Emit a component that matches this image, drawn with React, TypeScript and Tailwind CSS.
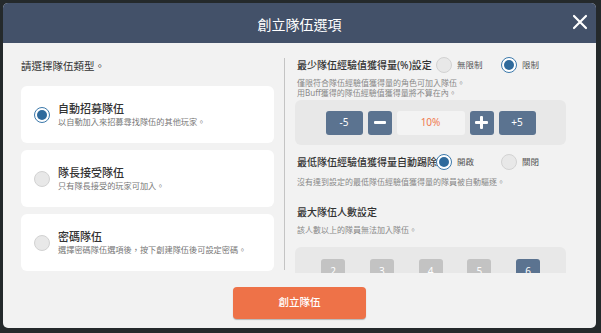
import React from 'react';

const font = { fontFamily: '"Noto Sans", "Noto Sans CJK TC", sans-serif' };

const Radio: React.FC<{ on?: boolean }> = ({ on }) =>
  on ? (
    <span className="w-4 h-4 rounded-full border-[1.5px] border-[#3b78aa] bg-white flex items-center justify-center shrink-0">
      <span className="w-[10px] h-[10px] rounded-full bg-[#2f6a9c]" />
    </span>
  ) : (
    <span className="w-4 h-4 rounded-full border-[1.5px] border-[#d2d2d2] bg-[#e8e8e8] shrink-0" />
  );

const TypeCard: React.FC<{ title: string; desc: string; on?: boolean }> = ({ title, desc, on }) => (
  <div className="h-[57px] bg-white rounded-[6px] flex items-center pl-[13px]">
    <Radio on={on} />
    <div className="ml-[8px] flex flex-col">
      <span className="text-[11px] leading-[14px] text-[#333] font-medium whitespace-nowrap">{title}</span>
      <span className="text-[8.2px] leading-[11px] text-[#777] whitespace-nowrap">{desc}</span>
    </div>
  </div>
);

const Option: React.FC<{ label: string; on?: boolean }> = ({ label, on }) => (
  <div className="w-[73px] flex items-center">
    <Radio on={on} />
    <span className="ml-[5px] text-[8.5px] text-[#555] whitespace-nowrap">{label}</span>
  </div>
);

const StepBtn: React.FC<{ w: string; children: React.ReactNode }> = ({ w, children }) => (
  <div className={`${w} h-[24px] rounded-[3px] bg-[#5b7390] text-white text-[10px] flex items-center justify-center`}>
    {children}
  </div>
);

export default function App() {
  return (
    <div style={font} className="w-[601px] h-[333px] bg-[#24292b] pt-[3px] pl-[3px]">
      <div className="w-[593px] h-[325px] bg-[#f2f2f2] rounded-[5px] overflow-hidden flex flex-col">
        <header className="h-[40px] shrink-0 bg-[#435169] relative flex items-center justify-center">
          <span className="text-white text-[14px] mt-[2px]">創立隊伍選項</span>
          <svg className="absolute right-[8px] top-[11px]" width="16" height="16" viewBox="0 0 16 16">
            <path d="M2 2 L14 14 M14 2 L2 14" stroke="white" strokeWidth="2.2" strokeLinecap="round" />
          </svg>
        </header>

        <div className="flex items-start h-[230px] shrink-0">
          <div className="w-[281px] shrink-0 pl-[18px] pr-[10px] pt-[15px]">
            <div className="text-[10.5px] leading-[16px] text-[#333] whitespace-nowrap">請選擇隊伍類型。</div>
            <div className="mt-[12px] flex flex-col gap-[7px]">
              <TypeCard on title="自動招募隊伍" desc="以自動加入來招募尋找隊伍的其他玩家。" />
              <TypeCard title="隊長接受隊伍" desc="只有隊長接受的玩家可加入。" />
              <TypeCard title="密碼隊伍" desc="選擇密碼隊伍選項後，按下創建隊伍後可設定密碼。" />
            </div>
          </div>

          <div className="w-px h-[212px] mt-[15px] bg-[#c4c4c4] shrink-0" />

          <div className="flex-1 h-full overflow-hidden pl-[10px] pr-[30px] pt-[13px]">
            <div className="flex items-center pl-[2px] h-[18px]">
              <span className="w-[139px] shrink-0 text-[10px] font-medium text-[#333] whitespace-nowrap">最少隊伍經驗值獲得量(%)設定</span>
              <Option label="無限制" />
              <Option on label="限制" />
            </div>
            <div className="pl-[2px] mt-[4px] text-[8px] leading-[10px] text-[#888] whitespace-nowrap">
              <div>僅限符合隊伍經驗值獲得量的角色可加入隊伍。</div>
              <div>用Buff獲得的隊伍經驗值獲得量將不算在內。</div>
            </div>
            <div className="mt-[2px] h-[45px] rounded-[6px] bg-[#e8e8e8] flex items-center justify-center gap-[5px]">
              <StepBtn w="w-[37px]">-5</StepBtn>
              <StepBtn w="w-[24px]">
                <span className="w-[12px] h-[3px] bg-white rounded-[1px]" />
              </StepBtn>
              <div className="w-[68px] h-[24px] rounded-[3px] bg-[#f3f3f3] text-[10px] text-[#f07a50] flex items-center justify-center">
                10%
              </div>
              <StepBtn w="w-[24px]">
                <span className="relative w-[13px] h-[13px] flex items-center justify-center">
                  <span className="absolute w-[13px] h-[3px] bg-white rounded-[1px]" />
                  <span className="absolute w-[3px] h-[13px] bg-white rounded-[1px]" />
                </span>
              </StepBtn>
              <StepBtn w="w-[37px]">+5</StepBtn>
            </div>

            <div className="flex items-center pl-[2px] h-[18px] mt-[8px]">
              <span className="w-[139px] shrink-0 text-[10px] font-medium text-[#333] whitespace-nowrap">最低隊伍經驗值獲得量自動踢除</span>
              <Option on label="開啟" />
              <Option label="關閉" />
            </div>
            <div className="pl-[2px] mt-[6px] text-[8px] leading-[10px] text-[#888] whitespace-nowrap">
              沒有達到設定的最低隊伍經驗值獲得量的隊員被自動驅逐。
            </div>

            <div className="pl-[2px] mt-[16px] text-[10px] leading-[18px] font-medium text-[#333]">最大隊伍人數設定</div>
            <div className="pl-[2px] mt-[4px] text-[8px] leading-[10px] text-[#888] whitespace-nowrap">該人數以上的隊員無法加入隊伍。</div>
            <div className="mt-[12px] h-[45px] rounded-[6px] bg-[#e8e8e8] flex justify-between px-[26px] pt-[12px]">
              {[2, 3, 4, 5, 6].map((n) => (
                <div
                  key={n}
                  className={`w-[24px] h-[24px] rounded-[3px] text-[10px] text-white flex items-center justify-center ${
                    n === 6 ? 'bg-[#5b7390]' : 'bg-[#c3c3c3]'
                  }`}
                >
                  {n}
                </div>
              ))}
            </div>
          </div>
        </div>

        <div className="flex justify-center pt-[14px]">
          <button className="w-[133px] h-[32px] rounded-[4px] bg-[#ee7248] text-white text-[10.5px] font-medium shadow-[0_1px_1px_rgba(0,0,0,0.25)]">
            創立隊伍
          </button>
        </div>
      </div>
    </div>
  );
}
